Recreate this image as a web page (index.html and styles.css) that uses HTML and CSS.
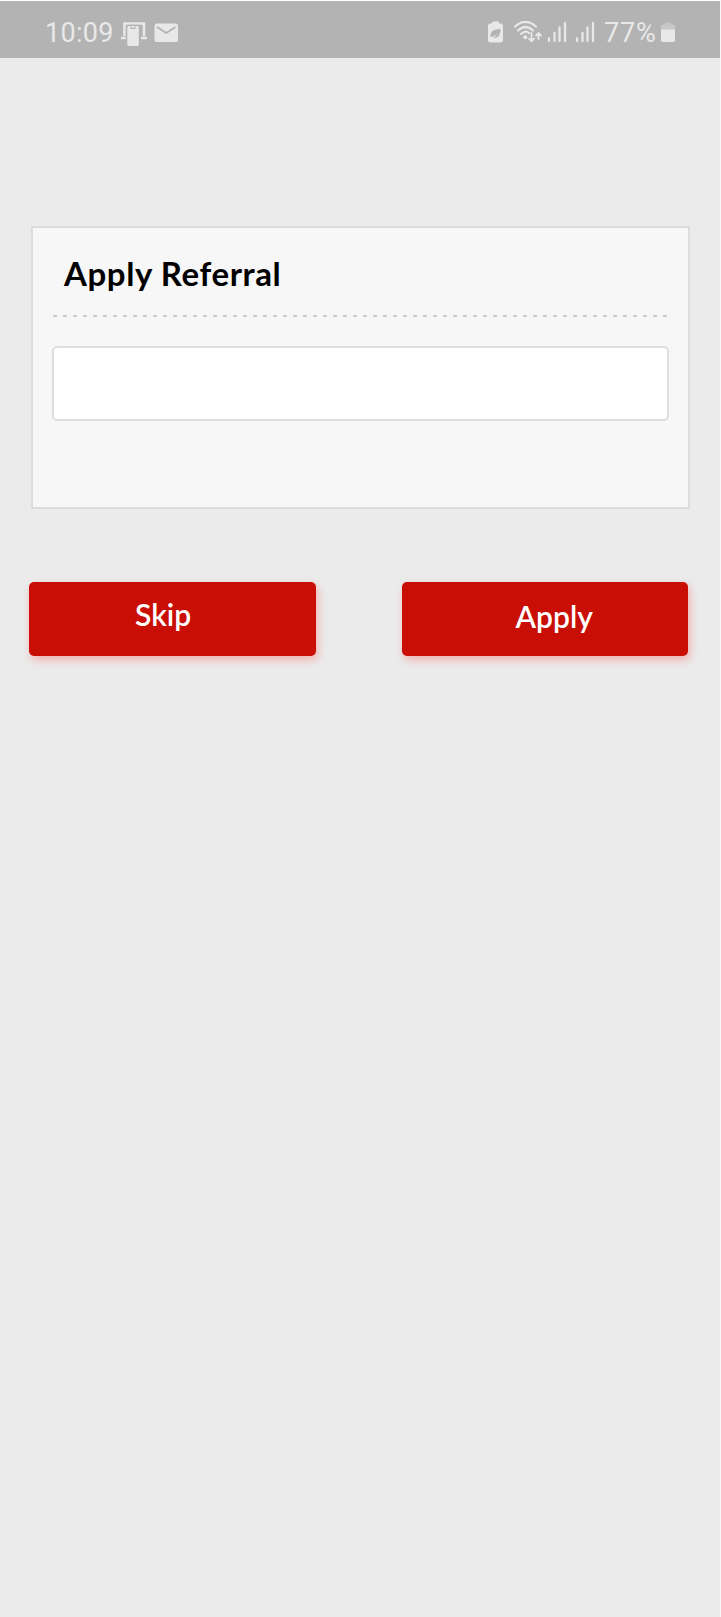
FILE: index.html
```html
<!DOCTYPE html>
<html lang="en">
<head>
<meta charset="utf-8">
<title>Apply Referral</title>
<link rel="stylesheet" href="styles.css">
</head>
<body>
<div class="screen">
  <header class="status">
    <span class="clock">10:09</span>
    <svg class="notices" width="58" height="26" viewBox="0 0 58 26">
      <path d="M3.500 15V2.500H23V15M0 17H6M20 17H26" fill="none" stroke="#e8e8e8" stroke-width="2.600"/>
      <rect x="4.800" y="3.800" width="14.400" height="22" rx="2" fill="#b3b3b3"/>
      <rect x="6.300" y="5" width="11.500" height="20" rx="1.500" fill="#e8e8e8"/>
      <path d="M10 5.500V7.500H14V5.500" fill="none" stroke="#b3b3b3" stroke-width="1.200"/>
      <rect x="33.500" y="2.500" width="23.500" height="18.500" rx="2.500" fill="#e8e8e8"/>
      <path d="M36 6L45.200 12L54.500 6" fill="none" stroke="#b3b3b3" stroke-width="1.800"/>
    </svg>
    <svg class="signals" width="108" height="24" viewBox="0 0 108 24">
      <path d="M4 2.500V1.500Q4 .5 5 .5H10Q11 .5 11 1.500V2.500H12.500Q15 2.500 15 5V19Q15 21.500 12.500 21.500H2.500Q0 21.500 0 19V5Q0 2.500 2.500 2.500Z" fill="#e8e8e8"/>
      <path d="M2.500 16C2 10 6 8.200 12.500 8C12.500 14.800 9 18 5 16.200Q8.500 15 9.500 12Q7 15.500 2.500 16Z" fill="#b3b3b3"/>
      <g fill="none" stroke="#e8e8e8" stroke-width="2.200" stroke-linecap="round">
        <path d="M27 5.500Q37.500-4 48 5.500M30 9.500Q37.500 2.500 45 9.500M33 13Q37.500 8.800 41 12"/>
        <path d="M43.500 12V20M41 17.700L43.500 20.200L46 17.700M50.500 18V12.500M48 14.500L50.500 12L53 14.500" stroke-width="1.800"/>
      </g>
      <circle cx="37.300" cy="16.300" r="2" fill="#e8e8e8"/>
      <path d="M61 17.500V20M66.500 12V20M71.500 6.500V20M77 2V20M89 17.500V20M94.500 12V20M99.500 6.500V20M105 2V20" stroke="#e8e8e8" stroke-width="2.300" stroke-linecap="round"/>
    </svg>
    <span class="percent">77%</span>
    <svg class="battery" width="15" height="21" viewBox="0 0 15 21">
      <path d="M0 8V4.500Q0 2.500 2 2.500H4V1.500Q4 .5 5 .5H9Q10 .5 10 1.500V2.500H12Q14 2.500 14 4.500V8Z" fill="#c8c8c8"/>
      <path d="M0 7.500H14V18Q14 20 12 20H2Q0 20 0 18Z" fill="#e8e8e8"/>
    </svg>
  </header>
  <main>
    <section class="card">
      <h1 class="title">Apply Referral</h1>
      <div class="divider"></div>
      <input class="field" type="text" aria-label="Referral code">
    </section>
    <div class="actions">
      <button class="button skip" type="button"><span class="label">Skip</span></button>
      <button class="button apply" type="button"><span class="label">Apply</span></button>
    </div>
  </main>
</div>
</body>
</html>
```
FILE: styles.css
```css
* { box-sizing: border-box; }
body { margin: 0; background: #fff; }
.screen {
  height: 1617px;
  padding-top: 1px;
  background: #ebebeb;
  border-right: 1px solid #f8f8f8;
  background-clip: content-box;
}
.status {
  display: flex;
  height: 57px;
  padding: 20px 0 0 45px;
  background: #b3b3b3;
  color: #e8e8e8;
  font: 27px/25px Roboto, sans-serif;
}
.clock { width: 76px; letter-spacing: .3px; }
.notices { flex: none; }
.signals { flex: none; margin-left: 309px; }
.percent { width: 54px; margin-left: 8px; letter-spacing: .8px; white-space: nowrap; }
.battery { flex: none; margin: 1px 0 0 3px; }
main { padding: 168px 30px 0 29px; }
.card {
  width: 659px;
  height: 283px;
  margin-left: 2px;
  padding: 25px 19px 0;
  background: #f7f7f7;
  border: 2px solid #dcdcdc;
}
.title {
  margin: 0;
  padding-left: 12px;
  color: #000;
  font: 700 33px/40px Lato, sans-serif;
  letter-spacing: .6px;
}
.divider {
  width: 615px;
  height: 2px;
  margin-top: 22px;
  background: repeating-linear-gradient(90deg, transparent 0 1px, #cacaca 1px 5px, transparent 5px 10px);
}
.field {
  display: block;
  width: 617px;
  height: 75px;
  margin-top: 29px;
  padding: 0 16px;
  background: #fff;
  border: 2px solid #dedede;
  border-radius: 5px;
  font: 28px Lato, sans-serif;
}
.actions { display: flex; justify-content: space-between; margin-top: 73px; width: 659px; }
.button {
  display: flex;
  align-items: flex-start;
  width: 286.5px;
  height: 74px;
  border: 0;
  border-radius: 5px;
  background: #c90e05;
  box-shadow: 2px 4px 8px rgba(255, 50, 40, .3);
  color: #fff;
  font: 600 30px/36px Lato, sans-serif;
}
.skip { padding: 14px 0 0 106px; }
.apply { padding: 16px 0 0 114px; }
```
